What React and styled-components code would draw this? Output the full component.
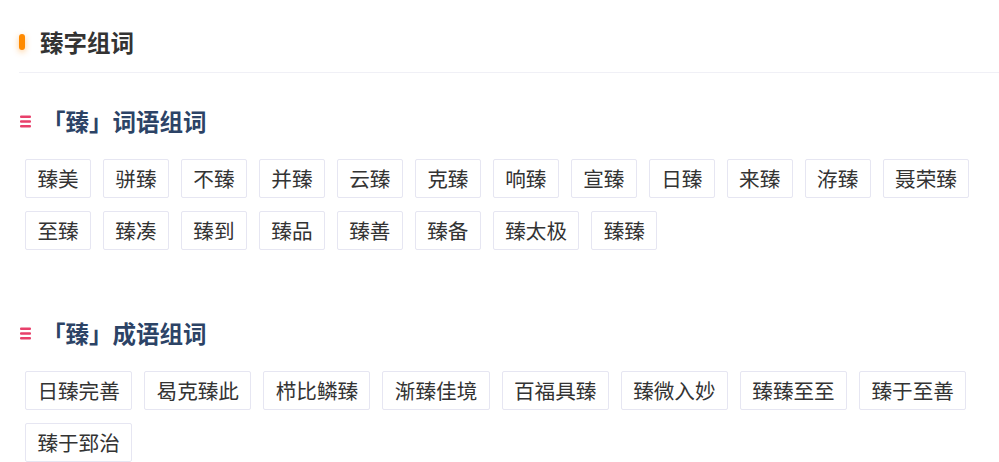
import React from "react";
import styled, { createGlobalStyle } from "styled-components";

const Global = createGlobalStyle`
  html, body { margin: 0; padding: 0; background: #fff; }
  body { font-family: "Noto Sans CJK SC", "Noto Sans", sans-serif; }
`;

const Page = styled.div`
  padding: 26px 0 0 19px;
  width: 980px;
`;

const Header = styled.div`
  display: flex;
  align-items: center;
  height: 32px;
  padding-bottom: 14px;
  border-bottom: 1px solid #f0f0f6;
`;

const Mark = styled.span`
  display: block;
  width: 6px;
  height: 16px;
  border-radius: 3px;
  background: #ff8a00;
  box-shadow: 0 2px 6px rgba(255, 138, 0, 0.45);
  margin-right: 15px;
`;

const Title = styled.h1`
  margin: 0;
  font-size: 23.5px;
  line-height: 32px;
  font-weight: 700;
  color: #333;
`;

const Section = styled.section`
  margin-top: ${(p) => p.$top}px;
`;

const Heading = styled.h2`
  display: flex;
  align-items: center;
  margin: 0;
  height: 32px;
  padding-left: 1px;
  font-size: 23.5px;
  font-weight: 700;
  color: #2c4366;
`;

const ListIcon = styled.svg`
  width: 11px;
  height: 13px;
  margin-right: 11px;
  flex: none;
`;

const Tags = styled.div`
  display: flex;
  flex-wrap: wrap;
  gap: 13px 12px;
  margin-top: 22px;
  padding-left: 6px;
`;

const Tag = styled.a`
  display: block;
  box-sizing: border-box;
  height: 39px;
  padding: 0 11.4px;
  border: 1px solid #e6e6f2;
  border-radius: 2px;
  font-size: 20.6px;
  line-height: 37px;
  color: #333;
  text-decoration: none;
  white-space: nowrap;
`;

const Icon = () => (
  <ListIcon viewBox="0 0 11 13">
    <rect x="0" y="0.5" width="11" height="2.4" rx="1" fill="#e8406b" />
    <rect x="0" y="5.3" width="11" height="2.4" rx="1" fill="#e8406b" />
    <rect x="0" y="10.1" width="11" height="2.4" rx="1" fill="#e8406b" />
  </ListIcon>
);

const words = ["臻美", "骈臻", "不臻", "并臻", "云臻", "克臻", "响臻", "宣臻", "日臻", "来臻", "洊臻", "聂荣臻", "至臻", "臻凑", "臻到", "臻品", "臻善", "臻备", "臻太极", "臻臻"];
const idioms = ["日臻完善", "曷克臻此", "栉比鳞臻", "渐臻佳境", "百福具臻", "臻微入妙", "臻臻至至", "臻于至善", "臻于郅治"];

export default function App() {
  return (
    <>
      <Global />
      <Page>
        <Header>
          <Mark />
          <Title>臻字组词</Title>
        </Header>
        <Section $top={32}>
          <Heading>
            <Icon />
            「臻」词语组词
          </Heading>
          <Tags>
            {words.map((w) => (
              <Tag key={w}>{w}</Tag>
            ))}
          </Tags>
        </Section>
        <Section $top={67}>
          <Heading>
            <Icon />
            「臻」成语组词
          </Heading>
          <Tags>
            {idioms.map((w) => (
              <Tag key={w}>{w}</Tag>
            ))}
          </Tags>
        </Section>
      </Page>
    </>
  );
}
